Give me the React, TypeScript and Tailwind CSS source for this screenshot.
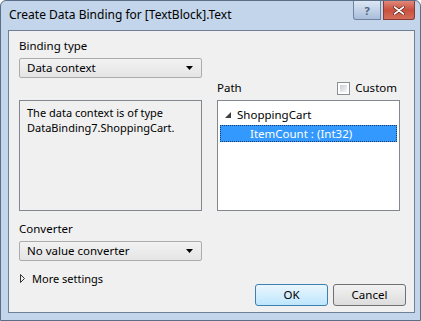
import React from "react";

const font = { fontFamily: '"Segoe UI", "Noto Sans", sans-serif' };

function DownArrow() {
  return (
    <svg width="7" height="4" viewBox="0 0 7 4" className="block">
      <path d="M0 0 H7 L3.5 4 Z" fill="#000" />
    </svg>
  );
}

function Dropdown({ label }: { label: string }) {
  return (
    <div className="flex h-[20px] w-[183px] items-center justify-between rounded-[2px] border border-[#acacac] bg-gradient-to-b from-[#f2f2f2] to-[#e5e5e5] pl-[7px] pr-[8px]">
      <span className="text-[11.5px] leading-none text-black">{label}</span>
      <DownArrow />
    </div>
  );
}

export default function App() {
  return (
    <div
      className="flex h-[321px] w-[421px] flex-col rounded-t-[6px] border border-[#5c6e86] bg-[#c3d5ea] text-black"
      style={font}
    >
      {/* Title bar */}
      <div className="flex h-[29px] items-start justify-between">
        <span className="mt-[6px] pl-[8px] text-[12px] leading-[16px] text-black">
          Create Data Binding for [TextBlock].Text
        </span>
        <div className="mr-[5px] flex items-start gap-[2px]">
          <div className="flex h-[19px] w-[28px] items-center justify-center rounded-bl-[3px] border border-t-0 border-[#6f82a0] bg-gradient-to-b from-[#dce7f4] to-[#a9bedb] text-[11px] font-bold leading-none text-[#50627c]">
            ?
          </div>
          <div className="flex h-[19px] w-[32px] items-center justify-center rounded-br-[3px] border border-t-0 border-[#8a3a32] bg-gradient-to-b from-[#e0887a] via-[#c9503e] to-[#d46e5a]">
            <svg width="12" height="9" viewBox="0 0 12 9">
              <path d="M1.5 1 L10.5 8 M10.5 1 L1.5 8" stroke="#5a1f18" strokeWidth="3" strokeLinecap="round" />
              <path d="M1.5 1 L10.5 8 M10.5 1 L1.5 8" stroke="#ffffff" strokeWidth="1.6" strokeLinecap="round" />
            </svg>
          </div>
        </div>
      </div>

      {/* Client area */}
      <div className="ml-[7px] mr-[5px] mb-[7px] flex flex-1 flex-col border border-[#6e7f96] bg-[#f0f0f0] pl-[10px] pr-[8px] pt-[7px] text-[11px]">
        <div className="text-[11.5px] leading-[16px]">Binding type</div>
        <div className="mt-[4px]">
          <Dropdown label="Data context" />
        </div>

        <div className="flex gap-[15px]">
          <div className="flex w-[183px] flex-col">
            <div className="h-[22px]" />
            <div className="h-[111px] border border-[#828790] bg-[#f0f0f0] px-[7px] pt-[4px] text-[11px] leading-[15px]">
              <div>The data context is of type</div>
              <div>DataBinding7.ShoppingCart.</div>
            </div>
          </div>
          <div className="flex w-[183px] flex-col">
            <div className="flex h-[20px] items-center justify-between">
              <span className="text-[11.5px] leading-[16px]">Path</span>
              <div className="mr-[3px] flex items-center gap-[5px]">
                <div className="h-[13px] w-[13px] border border-[#8e8f8f] bg-white p-[2px]">
                  <div className="h-full w-full bg-gradient-to-br from-[#cbcfd5] to-[#f6f6f6]" />
                </div>
                <span className="text-[11.5px] leading-[16px]">Custom</span>
              </div>
            </div>
            <div className="mt-[2px] h-[111px] border border-[#828790] bg-white px-[2px] pt-[5px]">
              <div className="flex h-[17px] items-center pl-[5px]">
                <svg width="6" height="6" viewBox="0 0 6 6" className="block">
                  <path d="M6 0 V6 H0 Z" fill="#404040" />
                </svg>
                <span className="ml-[6px] text-[11.5px] leading-none">ShoppingCart</span>
              </div>
              <div className="mt-[2px] flex h-[17px] items-center border border-dotted border-[#1a3a6a] bg-[#3399ff] pl-[29px]">
                <span className="text-[11.5px] leading-none text-white">ItemCount : (Int32)</span>
              </div>
            </div>
          </div>
        </div>

        <div className="mt-[10px] text-[11.5px] leading-[16px]">Converter</div>
        <div className="mt-[4px]">
          <Dropdown label="No value converter" />
        </div>

        <div className="flex items-start justify-between">
          <div className="mt-[9px] flex h-[16px] items-center">
            <svg width="5" height="9" viewBox="0 0 5 9" className="ml-[1px] block">
              <path d="M0.5 0.5 L4.5 4.5 L0.5 8.5 Z" fill="none" stroke="#333" strokeWidth="1" />
            </svg>
            <span className="ml-[7px] text-[11px] leading-none">More settings</span>
          </div>
          <div className="mt-[23px] flex gap-[5px]">
            <button className="flex h-[22px] w-[73px] items-center justify-center rounded-[3px] border border-[#3c7fb1] bg-gradient-to-b from-[#eaf6fd] to-[#bee6fd] text-[11.5px] leading-none text-black">
              OK
            </button>
            <button className="flex h-[22px] w-[73px] items-center justify-center rounded-[3px] border border-[#707070] bg-gradient-to-b from-[#f2f2f2] to-[#dddddd] text-[11.5px] leading-none text-black">
              Cancel
            </button>
          </div>
        </div>
      </div>
    </div>
  );
}
